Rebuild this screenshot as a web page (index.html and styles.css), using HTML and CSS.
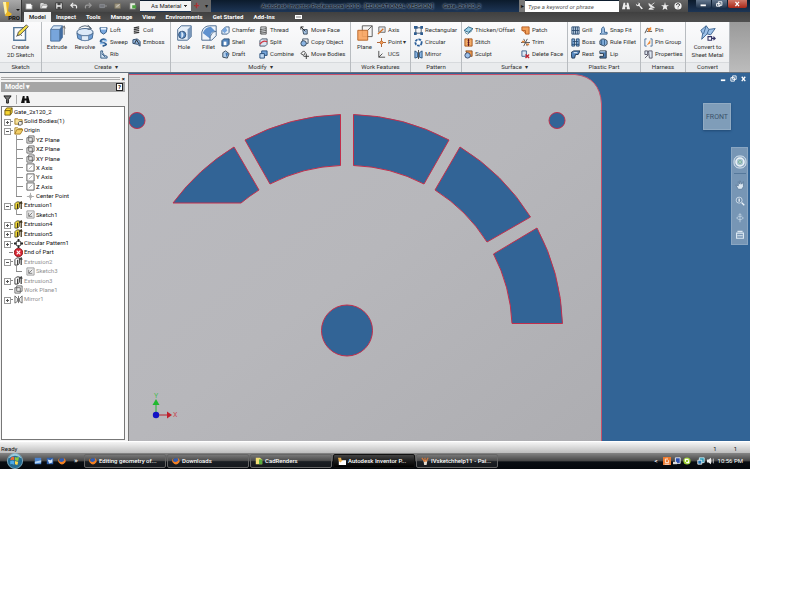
FILE: index.html
```html
<!DOCTYPE html>
<html lang="en">
<head>
  <title>Autodesk Inventor Professional 2010</title>
  <meta charset="UTF-8">
  <link rel="stylesheet" href="styles.css">
</head>
<body>
  <svg class="sprite" aria-hidden="true">
    <symbol id="i-new" viewBox="0 0 10 10"><path d="M1 2h6l2 2v5H1z" fill="#fff" stroke="#777"/></symbol>
    <symbol id="i-open" viewBox="0 0 10 10"><path d="M1 8V2h3l1 1h3v2" fill="#ccc" stroke="#eee"/><path d="M1 8l2-4h7L8 8z" fill="#eee" stroke="#666" stroke-width=".6"/></symbol>
    <symbol id="i-save" viewBox="0 0 10 10"><path d="M1 1h8v8H1z" fill="#f4f4f4" stroke="#222"/><path d="M3 1h4v3H3zM3 6h4v3H3z" fill="#444"/></symbol>
    <symbol id="i-undo" viewBox="0 0 10 10"><path d="M4 1L1 4l3 3M1 4h5q3 0 2 4" fill="none" stroke="#eee" stroke-width="1.5"/></symbol>
    <symbol id="i-redo" viewBox="0 0 10 10"><path d="M6 1l3 3-3 3M9 4H4Q1 4 2 8" fill="none" stroke="#999" stroke-width="1.5"/></symbol>
    <symbol id="i-select" viewBox="0 0 10 10"><path d="M1 3h6v4H1z" fill="#75777c" stroke="#8c8e94"/><path d="M7 5h3" stroke="#999"/></symbol>
    <symbol id="i-return" viewBox="0 0 10 10"><path d="M1 2h7v6H1z" fill="#a59c86" stroke="#77715f"/><path d="M3 6l4-3" stroke="#ddd"/></symbol>
    <symbol id="i-table" viewBox="0 0 10 10"><path d="M1 1h7v8H1z" fill="#e8f0e0" stroke="#666"/><path d="M4 4h5v4H4z" fill="#4da340"/></symbol>
    <symbol id="i-pencil" viewBox="0 0 20 20"><path d="M2 4h13v14H2z" fill="#fbfcfd" stroke="#56789a" stroke-width="1.6"/><path d="M5 14q2-5 6-1" fill="none" stroke="#555"/><path d="M6 13l1-4 9-8 2 2-9 9z" fill="#f4df46" stroke="#474747"/></symbol>
    <symbol id="i-extrude" viewBox="0 0 20 20"><path d="M3 6h10v13H3z" fill="#78a5dc"/><path d="M3 6l3-4h10l-3 4z" fill="#d7e7f8"/><path d="M13 6l3-4v13l-3 4z" fill="#416da3"/><path d="M3 6h10v13H3zM3 6l3-4h10l-3 4m3-4v13l-3 4" fill="none" stroke="#4a6f9c"/><path d="M18 12V3m-2 2l2-3 1 3" fill="none" stroke="#666"/></symbol>
    <symbol id="i-revolve" viewBox="0 0 20 20"><path d="M1 10l1 6q8 5 16 0l1-6q-9 5-18 0z" fill="#6f9fd6" stroke="#3d628c"/><ellipse cx="10" cy="9" rx="9" ry="4" fill="#dce9f8" stroke="#3b5c82"/><path d="M3 5q7-6 14 0M13 1l4 4-4 1" fill="none" stroke="#456"/><path d="M6 13h8v5q-4 1-8 0z" fill="#e0ebf7" stroke="#6685a8"/></symbol>
    <symbol id="i-hole" viewBox="0 0 20 20"><path d="M3 6l4-4h11v12l-4 4H3z" fill="#e6eff9" stroke="#3f6289"/><path d="M14 6l4-4v12l-4 4z" fill="#7896b9"/><circle cx="8" cy="12" r="4" fill="#5688bf" stroke="#2b4c74"/><path d="M7 8v8q5-4 0-8" fill="#d8e8fa"/></symbol>
    <symbol id="i-fillet" viewBox="0 0 20 20"><path d="M2 18V9q2-7 9-7h7v11l-5 5z" fill="#edf3fa" stroke="#3f6289"/><path d="M3 10q3-7 9-7l5 5q-6 0-6 8z" fill="#5e91cf"/><path d="M11 18q0-9 7-10" fill="none" stroke="#3f6289"/></symbol>
    <symbol id="i-plane" viewBox="0 0 20 20"><path d="M7 2h11v12H7z" fill="#f5f5f5" stroke="#555"/><path d="M2 7h11v11H2z" fill="#f8a35d" stroke="#b66121" fill-opacity=".9"/><path d="M13 7l5-5" stroke="#555"/></symbol>
    <symbol id="i-convert" viewBox="0 0 20 20"><path d="M2 7l6-5 3 4 7-1-5 7-4-1-6 6 1-6z" fill="#9dc1e8" stroke="#3c638f"/><path d="M8 2l-3 9M11 6l-2 5" stroke="#3c638f"/><path d="M10 14h4v4h-4zM14 16h4m-2-2l2 2-2 2" fill="#fff" stroke="#336" stroke-width="1.2"/></symbol>
    <symbol id="i-loft" viewBox="0 0 10 10"><path d="M1 2h8L8 7 5 9 2 7z" fill="#79a8df" stroke="#28527e"/><path d="M2 2h6v2H2z" fill="#eaf4ff"/></symbol>
    <symbol id="i-sweep" viewBox="0 0 10 10"><path d="M8 3Q6 0 3 2T4 5t4 2-4 2" fill="none" stroke="#2e5f94" stroke-width="2"/><path d="M5 3h4M1 6h4" stroke="#8abbed" stroke-width="2"/></symbol>
    <symbol id="i-rib" viewBox="0 0 10 10"><path d="M2 1v8h7V7L6 6 4 3V1z" fill="#d2e3f4" stroke="#28527e"/><path d="M3 4l4 4" stroke="#28527e"/></symbol>
    <symbol id="i-coil" viewBox="0 0 10 10"><path d="M2 2l6-1M2 4l6-1M2 6l6-1M2 8l6-1" stroke="#333" stroke-width="1.3"/></symbol>
    <symbol id="i-emboss" viewBox="0 0 10 10"><path d="M1 2l5-1 3 3v5L6 7 1 6z" fill="#90b5de" stroke="#284566"/><path d="M3 6l2-4 3 5" fill="none" stroke="#222"/></symbol>
    <symbol id="i-chamfer" viewBox="0 0 10 10"><path d="M1 9V5l4-4h4v6L7 9z" fill="#e7f0f9" stroke="#3b5e87"/><path d="M1 5l4-4 2 4-3 3z" fill="#78a6dd"/></symbol>
    <symbol id="i-shell" viewBox="0 0 10 10"><path d="M1 3l2-2h6v6L7 9H1z" fill="#5386bf" stroke="#27496e"/><path d="M3 4h3v4H3z" fill="#fff"/></symbol>
    <symbol id="i-draft" viewBox="0 0 10 10"><path d="M2 3l3-2 4 3-2 5-5-1z" fill="#b1cdeb" stroke="#345"/><path d="M5 3l3 1-2 4z" fill="#3b72b0"/></symbol>
    <symbol id="i-thread" viewBox="0 0 10 10"><path d="M2 1h6v8H2zM1 4l7-1M1 6l7-1M1 8l7-1" fill="#e5e8eb" stroke="#555"/></symbol>
    <symbol id="i-split" viewBox="0 0 10 10"><path d="M1 3l2-2h6v6L7 9H1z" fill="#d9e5f2" stroke="#456"/><path d="M1 7q3-5 8-3" fill="none" stroke="#cf3945" stroke-width="1.4"/></symbol>
    <symbol id="i-combine" viewBox="0 0 10 10"><path d="M3 1h6v5H3z" fill="#76a6db" stroke="#234b77"/><path d="M1 4h5v5H1z" fill="#bed7f1" stroke="#234b77"/></symbol>
    <symbol id="i-moveface" viewBox="0 0 10 10"><path d="M3 4h5v5H4z" fill="#a8c7e9" stroke="#345"/><path d="M1 4V1h3M1 1l5 5" fill="none" stroke="#222"/></symbol>
    <symbol id="i-copy" viewBox="0 0 10 10"><path d="M3 1h6v5H3z" fill="#eee" stroke="#456"/><circle cx="4" cy="6" r="3" fill="#8bb5e4" stroke="#345"/></symbol>
    <symbol id="i-movebody" viewBox="0 0 10 10"><path d="M4 1L1 4l3 2 2-3zM7 4v6M4 7h6" fill="none" stroke="#333"/></symbol>
    <symbol id="i-axis" viewBox="0 0 10 10"><path d="M2 1h7v6H2z" fill="#e4e8ed" stroke="#666"/><path d="M1 9l6-6" stroke="#d86f21" stroke-width="1.4"/></symbol>
    <symbol id="i-point" viewBox="0 0 10 10"><path d="M5 0v10M0 5h10" stroke="#a85a28"/><path d="M5 3l2 2-2 2-2-2z" fill="#f4a25f" stroke="#b45b1d"/></symbol>
    <symbol id="i-ucs" viewBox="0 0 10 10"><path d="M2 1v7h7M2 8l4-4" fill="none" stroke="#444"/></symbol>
    <symbol id="i-rect" viewBox="0 0 10 10"><path d="M2 2h6v6H2z" fill="none" stroke="#456"/><path d="M0 0h4v3H0zM7 0h3v3H7zM0 7h3v3H0zM7 7h3v3H7z" fill="#2f5d91"/></symbol>
    <symbol id="i-circ" viewBox="0 0 10 10"><circle cx="5" cy="5" r="3.5" fill="#fff" stroke="#295d98" stroke-width="2" stroke-dasharray="3 1"/></symbol>
    <symbol id="i-mirror" viewBox="0 0 10 10"><path d="M1 1l3 2v5L1 9zM9 1L6 3v5l3 1z" fill="#8ab5e5" stroke="#28527e"/><path d="M5 0v10" stroke="#444"/></symbol>
    <symbol id="i-thicken" viewBox="0 0 10 10"><path d="M0 5l5-4 5 2-5 4z" fill="#9bd0e8" stroke="#2b607e"/><path d="M1 7l3 2 5-4" fill="none" stroke="#397491"/></symbol>
    <symbol id="i-stitch" viewBox="0 0 10 10"><path d="M1 1h8v8H1z" fill="#f4ad68" stroke="#a45119"/><path d="M5 1v8M4 3h2M4 5h2M4 7h2" stroke="#512"/></symbol>
    <symbol id="i-sculpt" viewBox="0 0 10 10"><path d="M2 1h7v6H5z" fill="#f59b4c" stroke="#844c22"/><circle cx="4" cy="6" r="3" fill="#9bbfe8" stroke="#346"/></symbol>
    <symbol id="i-patch" viewBox="0 0 10 10"><path d="M1 1h8v8H5V5H1z" fill="#f3a15a" stroke="#b4591e"/><path d="M2 6h2v2" fill="none" stroke="#d97831"/></symbol>
    <symbol id="i-trim" viewBox="0 0 10 10"><path d="M0 5h10M3 1l4 8M7 1L3 9" stroke="#555"/><path d="M1 3h3v2H1zM6 6h3v2H6z" fill="#dd853d"/></symbol>
    <symbol id="i-delface" viewBox="0 0 10 10"><path d="M1 1h5v6H1z" fill="#dde8f5" stroke="#3a5f8b"/><path d="M5 5l4 4M9 5L5 9" stroke="#c12331" stroke-width="1.5"/></symbol>
    <symbol id="i-grill" viewBox="0 0 10 10"><path d="M1 1h8v8H1z" fill="#cbdced" stroke="#29496e"/><path d="M3 1v8M5 1v8M7 1v8M1 5h8" stroke="#29496e"/></symbol>
    <symbol id="i-boss" viewBox="0 0 10 10"><path d="M1 1h3v8H1zM6 1h3v8H6zM2 4h6M1 7h8" fill="#82aedd" stroke="#24486e"/></symbol>
    <symbol id="i-rest" viewBox="0 0 10 10"><path d="M0 3l3-2h7L8 5H5L4 9H1z" fill="#5587be" stroke="#1c3350"/><path d="M3 3h4" stroke="#fff"/></symbol>
    <symbol id="i-snap" viewBox="0 0 10 10"><path d="M3 7V3q2-4 3 0v4h3v2H1z" fill="#a7c8ed" stroke="#2b5887"/></symbol>
    <symbol id="i-rule" viewBox="0 0 10 10"><path d="M1 3q3-4 8 0v4L6 9 1 7z" fill="#8ab4e1" stroke="#345"/><path d="M3 2v6M6 2v6" stroke="#285681"/></symbol>
    <symbol id="i-lip" viewBox="0 0 10 10"><path d="M1 1h7v8H1V7h4V4H1z" fill="#4c7db3" stroke="#234"/><path d="M1 2h6" stroke="#cfe0f2"/></symbol>
    <symbol id="i-pin" viewBox="0 0 10 10"><path d="M1 8l3-6M3 6h6M4 3h3" stroke="#444"/><path d="M4 3l4-2v3L5 7z" fill="#ee8732"/></symbol>
    <symbol id="i-pingroup" viewBox="0 0 10 10"><path d="M3 1H1v8h2M7 1h2v8H7" fill="none" stroke="#446c98"/><path d="M3 8l4-6v4z" fill="#ed8833"/></symbol>
    <symbol id="i-props" viewBox="0 0 10 10"><path d="M1 1h3v4H1zM5 1h4v8H6zM1 9l4-4" fill="#dfe8f3" stroke="#556"/></symbol>
    <symbol id="i-binoc" viewBox="0 0 10 10"><path d="M2 1h2v3h2V1h2l2 8H6V6H4v3H0z" fill="currentColor"/></symbol>
    <symbol id="i-wrench" viewBox="0 0 10 10"><path d="M1 2l2 2 2-2-2-1q4-1 3 3l4 4-2 1-3-4Q1 6 1 2z" fill="currentColor"/></symbol>
    <symbol id="i-dish" viewBox="0 0 10 10"><path d="M1 2q1 6 7 5zM4 4l4-3M3 7L1 9h6" fill="currentColor" stroke="currentColor"/></symbol>
    <symbol id="i-star" viewBox="0 0 10 10"><path d="M5 0l1 4h4L7 6l1 4-3-2-3 2 1-4-3-2h4z" fill="currentColor"/></symbol>
    <symbol id="i-help" viewBox="0 0 10 10"><circle cx="5" cy="5" r="4.5" fill="#f4f4f4"/><path d="M3 4q0-2 2-2t2 2L5 6M5 7v1" fill="none" stroke="#333" stroke-width="1.2"/></symbol>
    <symbol id="i-funnel" viewBox="0 0 10 10"><path d="M1 1h8L6 5v4H4V5z" fill="#777" stroke="#111"/></symbol>
    <symbol id="t-part" viewBox="0 0 10 10"><path d="M1 4l2-3h6v5L7 9H1z" fill="#f7d531" stroke="#705a10"/><path d="M1 4h6v5M7 4l2-3" fill="none" stroke="#705a10"/></symbol>
    <symbol id="t-folder" viewBox="0 0 10 10"><path d="M1 9V2h3l1 1h4v2" fill="#fff3b3" stroke="#a47b21"/><path d="M1 9l2-5h7L7 9z" fill="#f3cf68" stroke="#a47b21"/></symbol>
    <symbol id="t-bodies" viewBox="0 0 10 10"><path d="M1 8V2h3l1 1h4v5z" fill="#f7e29a" stroke="#a47b21"/><path d="M5 6l1-1h3v3L8 9H5z" fill="#eee" stroke="#555"/></symbol>
    <symbol id="t-plane" viewBox="0 0 10 10"><path d="M3 1h6v6H3zM1 3h6v6H1z" fill="#eee" stroke="#666"/></symbol>
    <symbol id="t-axis" viewBox="0 0 10 10"><path d="M1 1h8v8H1z" fill="#fff" stroke="#555"/><path d="M3 7l4-4" stroke="#aaa"/></symbol>
    <symbol id="t-point" viewBox="0 0 10 10"><path d="M5 1v8M1 5h8M5 3l2 2-2 2-2-2z" fill="#fff" stroke="#aaa"/></symbol>
    <symbol id="t-extr" viewBox="0 0 10 10"><path d="M1 3l2-2h3v6L4 9H1z" fill="#f5dc35" stroke="#553"/><path d="M4 3v6M8 9V1M6 3l2-2 1 2" fill="none" stroke="#3e321a" stroke-width="1.4"/></symbol>
    <symbol id="t-extroff" viewBox="0 0 10 10"><path d="M1 3l2-2h3v6L4 9H1z" fill="#fff" stroke="#333"/><path d="M4 3v6M8 9V1M6 3l2-2 1 2" fill="none" stroke="#444" stroke-width="1.4"/></symbol>
    <symbol id="t-sketch" viewBox="0 0 10 10"><path d="M1 1h8v8H1z" fill="#eee" stroke="#999"/><path d="M3 3v4h4M3 7l4-4" fill="none" stroke="#777"/></symbol>
    <symbol id="t-circ" viewBox="0 0 10 10"><path d="M4 0h2v3H4zM4 7h2v3H4zM0 4h3v2H0zM7 4h3v2H7z" fill="#222"/><circle cx="5" cy="5" r="3" fill="none" stroke="#333"/></symbol>
    <symbol id="t-end" viewBox="0 0 10 10"><circle cx="5" cy="5" r="4.5" fill="#d92635" stroke="#811"/><path d="M3 3l4 4M7 3L3 7" stroke="#fff" stroke-width="1.3"/></symbol>
    <symbol id="t-mirror" viewBox="0 0 10 10"><path d="M1 1l3 3v3L1 9zM9 1L6 4v3l3 2zM5 1v8" fill="#eee" stroke="#666"/></symbol>
    <symbol id="k-fox" viewBox="0 0 10 10"><circle cx="5" cy="5" r="3.5" fill="#315cb2"/><path d="M2 1Q0 5 3 6t5-2l-1-3q4 3 2 6-4 5-8 0-2-3 1-6z" fill="#f28124"/></symbol>
    <symbol id="k-desk" viewBox="0 0 10 10"><path d="M1 1h8v8H1z" fill="#4b83cd"/><path d="M1 6l8-2v3L1 8z" fill="#b5d6f5"/></symbol>
    <symbol id="k-switch" viewBox="0 0 10 10"><path d="M1 1h8v8H1z" fill="#2d5eaa"/><path d="M2 3l4 1 2-2v5L4 8z" fill="#d2e4f7"/></symbol>
    <symbol id="k-folder" viewBox="0 0 10 10"><path d="M1 1h5l3 2v6H1z" fill="#f3df75"/><path d="M5 3h4v6H5z" fill="#58ad3f"/></symbol>
    <symbol id="k-inv" viewBox="0 0 10 10"><path d="M1 4h9v6H1z" fill="#fff"/><path d="M0 1h4v2l2 1-3 3-2-2z" fill="#e8ad4b"/></symbol>
    <symbol id="k-paint" viewBox="0 0 10 10"><path d="M3 4h5l-1 6H4z" fill="#e5ddd1"/><path d="M1 1l4 5M5 1v4M9 1L6 6" stroke="#dc7937" stroke-width="1.4"/></symbol>
    <symbol id="k-java" viewBox="0 0 10 10"><path d="M0 0h10v10H0z" fill="#ee792d"/><path d="M3 2v5h4V4M5 1v3M2 9h6" fill="none" stroke="#fff"/></symbol>
    <symbol id="k-net" viewBox="0 0 10 10"><path d="M3 1h6v7H3z" fill="#2b4fb0" stroke="#fff"/><path d="M0 6h5v3H0z" fill="#ddd"/></symbol>
    <symbol id="k-update" viewBox="0 0 10 10"><circle cx="5" cy="5" r="4.5" fill="#9bcf2e"/><path d="M3 6V3h4M7 4v3H4" fill="none" stroke="#fff" stroke-width="1.5"/></symbol>
    <symbol id="k-sync" viewBox="0 0 10 10"><path d="M3 1h6v6H3z" fill="#2a9bb8" stroke="#d8f6ff"/><path d="M1 4h5v5H1z" fill="#2674b1" stroke="#fff"/></symbol>
    <symbol id="k-sound" viewBox="0 0 10 10"><path d="M0 3h2l3-2v8L2 7H0z" fill="#eee"/><path d="M6 3v4M8 2v6" stroke="#ccc"/></symbol>
  </svg>

  <div class="desktop">
    <header class="top">
      <button class="app-button" aria-label="Application menu">
        <svg viewBox="0 0 21 22"><path d="M3 2h6v2L8 11l4 3-2 2H5l1-3L5 4H3z" fill="#e9b524"/><path d="M3 2h3l1 10-2 3z" fill="#fff1a2"/><path d="M16 9h4l-2 2z" fill="#111"/></svg>
        <span>PRO</span>
      </button>
      <div class="bars">
        <div class="title-bar">
          <div class="quick">
            <button aria-label="New"><svg><use href="#i-new"/></svg></button>
            <button aria-label="Open"><svg><use href="#i-open"/></svg></button>
            <button aria-label="Save"><svg><use href="#i-save"/></svg></button>
            <button aria-label="Undo"><svg><use href="#i-undo"/></svg></button>
            <button aria-label="Redo"><svg><use href="#i-redo"/></svg></button>
            <button aria-label="Select"><svg><use href="#i-select"/></svg></button>
            <button aria-label="Return"><svg><use href="#i-return"/></svg></button>
            <button aria-label="Update"><svg><use href="#i-table"/></svg></button>
          </div>
          <select class="material" aria-label="Color"><option>As Material</option></select>
          <span class="quick-end"><b>+</b>▾</span>
          <h1><span>Autodesk Inventor Professional 2010 - [EDUCATIONAL VERSION]</span><span>Gate_2x120_2</span></h1>
          <span class="search-arrow">▸</span>
          <input class="search" type="text" placeholder="Type a keyword or phrase" aria-label="Search help">
          <div class="info">
            <button aria-label="Find"><svg><use href="#i-binoc"/></svg></button>
            <button aria-label="Tools"><svg><use href="#i-wrench"/></svg></button>
            <button aria-label="News"><svg><use href="#i-dish"/></svg></button>
            <button aria-label="Favorites"><svg><use href="#i-star"/></svg></button>
            <button aria-label="Help"><svg><use href="#i-help"/></svg></button>
          </div>
          <div class="window-buttons">
            <button aria-label="Minimize"><svg viewBox="0 0 14 9"><path d="M4 5h6v2H4z" fill="#fff"/></svg></button>
            <button aria-label="Restore"><svg viewBox="0 0 14 9"><path d="M6 2h4v4H6zM4 4h4v3H4z" fill="none" stroke="#fff"/></svg></button>
            <button class="close" aria-label="Close"><svg viewBox="0 0 14 9"><path d="M5 2l4 5M9 2L5 7" stroke="#fff" stroke-width="1.4"/></svg></button>
          </div>
        </div>
        <nav class="tabs">
          <button class="active">Model</button>
          <button>Inspect</button>
          <button>Tools</button>
          <button>Manage</button>
          <button>View</button>
          <button>Environments</button>
          <button>Get Started</button>
          <button>Add-Ins</button>
          <button aria-label="Minimize ribbon"><i class="ribbon-toggle"></i></button>
        </nav>
      </div>
    </header>

    <div class="ribbon">
      <section class="panel">
        <div class="tools sketch-tools">
          <button class="big"><svg><use href="#i-pencil"/></svg>Create<br>2D Sketch</button>
        </div>
        <h2>Sketch</h2>
      </section>
      <section class="panel">
        <div class="tools create-tools">
          <button class="big"><svg><use href="#i-extrude"/></svg>Extrude</button>
          <button class="big"><svg><use href="#i-revolve"/></svg>Revolve</button>
          <button><svg><use href="#i-loft"/></svg>Loft</button>
          <button><svg><use href="#i-sweep"/></svg>Sweep</button>
          <button><svg><use href="#i-rib"/></svg>Rib</button>
          <button><svg><use href="#i-coil"/></svg>Coil</button>
          <button><svg><use href="#i-emboss"/></svg>Emboss</button>
        </div>
        <h2 class="more">Create</h2>
      </section>
      <section class="panel">
        <div class="tools modify-tools">
          <button class="big"><svg><use href="#i-hole"/></svg>Hole</button>
          <button class="big"><svg><use href="#i-fillet"/></svg>Fillet</button>
          <button><svg><use href="#i-chamfer"/></svg>Chamfer</button>
          <button><svg><use href="#i-shell"/></svg>Shell</button>
          <button><svg><use href="#i-draft"/></svg>Draft</button>
          <button><svg><use href="#i-thread"/></svg>Thread</button>
          <button><svg><use href="#i-split"/></svg>Split</button>
          <button><svg><use href="#i-combine"/></svg>Combine</button>
          <button><svg><use href="#i-moveface"/></svg>Move Face</button>
          <button><svg><use href="#i-copy"/></svg>Copy Object</button>
          <button><svg><use href="#i-movebody"/></svg>Move Bodies</button>
        </div>
        <h2 class="more">Modify</h2>
      </section>
      <section class="panel">
        <div class="tools work-tools">
          <button class="big"><svg><use href="#i-plane"/></svg>Plane</button>
          <button><svg><use href="#i-axis"/></svg>Axis</button>
          <button><svg><use href="#i-point"/></svg>Point ▾</button>
          <button><svg><use href="#i-ucs"/></svg>UCS</button>
        </div>
        <h2>Work Features</h2>
      </section>
      <section class="panel">
        <div class="tools">
          <button><svg><use href="#i-rect"/></svg>Rectangular</button>
          <button><svg><use href="#i-circ"/></svg>Circular</button>
          <button><svg><use href="#i-mirror"/></svg>Mirror</button>
        </div>
        <h2>Pattern</h2>
      </section>
      <section class="panel">
        <div class="tools surface-tools">
          <button><svg><use href="#i-thicken"/></svg>Thicken/Offset</button>
          <button><svg><use href="#i-stitch"/></svg>Stitch</button>
          <button><svg><use href="#i-sculpt"/></svg>Sculpt</button>
          <button><svg><use href="#i-patch"/></svg>Patch</button>
          <button><svg><use href="#i-trim"/></svg>Trim</button>
          <button><svg><use href="#i-delface"/></svg>Delete Face</button>
        </div>
        <h2 class="more">Surface</h2>
      </section>
      <section class="panel">
        <div class="tools plastic-tools">
          <button><svg><use href="#i-grill"/></svg>Grill</button>
          <button><svg><use href="#i-boss"/></svg>Boss</button>
          <button><svg><use href="#i-rest"/></svg>Rest</button>
          <button><svg><use href="#i-snap"/></svg>Snap Fit</button>
          <button><svg><use href="#i-rule"/></svg>Rule Fillet</button>
          <button><svg><use href="#i-lip"/></svg>Lip</button>
        </div>
        <h2>Plastic Part</h2>
      </section>
      <section class="panel">
        <div class="tools">
          <button><svg><use href="#i-pin"/></svg>Pin</button>
          <button><svg><use href="#i-pingroup"/></svg>Pin Group</button>
          <button><svg><use href="#i-props"/></svg>Properties</button>
        </div>
        <h2>Harness</h2>
      </section>
      <section class="panel">
        <div class="tools convert-tools">
          <button class="big"><svg><use href="#i-convert"/></svg>Convert to<br>Sheet Metal</button>
        </div>
        <h2>Convert</h2>
      </section>
    </div>

    <main class="workspace">
      <aside class="browser">
        <div class="grip"><i></i><button aria-label="Close browser">×</button></div>
        <div class="browser-title"><span>Model ▾</span><button aria-label="Help">?</button></div>
        <div class="browser-tools">
          <button aria-label="Filter"><svg><use href="#i-funnel"/></svg></button>
          <button aria-label="Find"><svg><use href="#i-binoc"/></svg></button>
        </div>
        <div class="tree-box">
          <ul class="tree">
            <li class="root"><svg><use href="#t-part"/></svg>Gate_2x120_2</li>
            <li><i class="plus"></i><svg><use href="#t-bodies"/></svg>Solid Bodies(1)</li>
            <li><i class="minus"></i><svg><use href="#t-folder"/></svg>Origin</li>
            <li class="child"><i></i><svg><use href="#t-plane"/></svg>YZ Plane</li>
            <li class="child"><i></i><svg><use href="#t-plane"/></svg>XZ Plane</li>
            <li class="child"><i></i><svg><use href="#t-plane"/></svg>XY Plane</li>
            <li class="child"><i></i><svg><use href="#t-axis"/></svg>X Axis</li>
            <li class="child"><i></i><svg><use href="#t-axis"/></svg>Y Axis</li>
            <li class="child"><i></i><svg><use href="#t-axis"/></svg>Z Axis</li>
            <li class="child last"><i></i><svg><use href="#t-point"/></svg>Center Point</li>
            <li><i class="minus"></i><svg><use href="#t-extr"/></svg>Extrusion1</li>
            <li class="child last"><i></i><svg><use href="#t-sketch"/></svg>Sketch1</li>
            <li><i class="plus"></i><svg><use href="#t-extr"/></svg>Extrusion4</li>
            <li><i class="plus"></i><svg><use href="#t-extr"/></svg>Extrusion5</li>
            <li><i class="plus"></i><svg><use href="#t-circ"/></svg>Circular Pattern1</li>
            <li><i class="none"></i><svg><use href="#t-end"/></svg>End of Part</li>
            <li class="off"><i class="minus"></i><svg><use href="#t-extroff"/></svg>Extrusion2</li>
            <li class="child last off"><i></i><svg><use href="#t-sketch"/></svg>Sketch3</li>
            <li class="off"><i class="plus"></i><svg><use href="#t-extroff"/></svg>Extrusion3</li>
            <li class="off"><i class="none"></i><svg><use href="#t-plane"/></svg>Work Plane1</li>
            <li class="off"><i class="plus"></i><svg><use href="#t-mirror"/></svg>Mirror1</li>
          </ul>
        </div>
      </aside>

      <div class="view">
        <svg class="model" viewBox="129 73 621 368">
          <defs>
            <linearGradient id="metal" x1="0" y1="0" x2="1" y2="1">
              <stop offset="0" stop-color="#bbbbc0"/>
              <stop offset=".5" stop-color="#b7b7bb"/>
              <stop offset="1" stop-color="#adadb1"/>
            </linearGradient>
          </defs>
          <path d="M120 74.5H575Q600 77 601.5 104V450H120z" fill="url(#metal)" stroke="#c8506a"/>
          <g fill="#326496" stroke="#c22f4c">
            <circle cx="137" cy="120.5" r="8"/>
            <circle cx="557" cy="120.5" r="8"/>
            <circle cx="347" cy="330.5" r="25.5"/>
            <path d="M173 203A216 216 0 0 1 234 147L259 190A165 165 0 0 0 241 203z"/>
            <path d="M245 140A216 216 0 0 1 340.500 114.500V165.500A165 165 0 0 0 270 184z"/>
            <path d="M353.500 114.500A216 216 0 0 1 449 140L424 184A165 165 0 0 0 353.500 165.500z"/>
            <path d="M460 147A216 216 0 0 1 530.500 217L487 242A165 165 0 0 0 435 190z"/>
            <path d="M537 228A216 216 0 0 1 562.500 323.500H512A165 165 0 0 0 493.500 254z"/>
          </g>
          <path d="M156 414V404" stroke="#25b534"/><path d="M152.500 405L156 399l3.500 6z" fill="#20b92f"/>
          <path d="M157 415h10" stroke="#b9202c"/><path d="M167 411.500l5 3.500-5 3.500z" fill="#c01f2c"/>
          <circle cx="156" cy="415" r="3.200" fill="#1212c4"/>
          <text x="154" y="398" fill="#4bbd58">Y</text>
          <text x="173" y="417" fill="#c94a54">X</text>
        </svg>
        <div class="doc-buttons">
          <button aria-label="Minimize document"><svg viewBox="0 0 8 8"><path d="M1 5h5v2H1z" fill="#fff"/></svg></button>
          <button aria-label="Restore document"><svg viewBox="0 0 8 8"><path d="M3 1h4v4H3zM1 3h4v4H1z" fill="none" stroke="#fff"/></svg></button>
          <button aria-label="Close document"><svg viewBox="0 0 8 8"><path d="M2 2l4 5M6 2L2 7" stroke="#fff" stroke-width="1.5"/></svg></button>
        </div>
        <button class="cube">FRONT</button>
        <div class="nav-bar">
          <button aria-label="Steering wheel"><svg viewBox="0 0 14 14"><rect x="1" y="1" width="12" height="12" rx="5" fill="#8aa4bf" stroke="#d5e3ee"/><circle cx="7" cy="7" r="4" fill="#a9c3d4" stroke="#eef5f8" stroke-width="1.5"/><circle cx="7" cy="7" r="1.5" fill="#bad0df" stroke="#7fb596"/></svg></button>
          <hr>
          <button aria-label="Pan"><svg viewBox="0 0 14 14"><path d="M5 12L2 7l3 1V3l2 3V2l2 4 2-3v6l-2 3z" fill="#dce8f2" stroke="#607d9c"/></svg></button>
          <button aria-label="Zoom"><svg viewBox="0 0 14 14"><circle cx="6" cy="6" r="3.5" fill="#6c8baa" stroke="#d5e2ee"/><path d="M6 4v4M9 9l3 3" stroke="#eef4fa" stroke-width="1.5"/></svg></button>
          <button aria-label="Orbit"><svg viewBox="0 0 14 14"><path d="M7 2v10M3 7q4-4 8 0M3 7q4 4 8 0M5 4l2-2 2 2" fill="none" stroke="#bdd0e2"/></svg></button>
          <button aria-label="Look at"><svg viewBox="0 0 14 14"><path d="M3 6h8v6H3zM4 4h6M4 9h6" fill="none" stroke="#dce8f2" stroke-width="1.3"/></svg></button>
        </div>
      </div>
    </main>

    <footer class="status"><span>Ready</span><span>1</span><span>1</span></footer>

    <div class="taskbar">
      <button class="start" aria-label="Start">
        <svg viewBox="0 0 20 20"><circle cx="10" cy="10" r="9.5" fill="#256b91" stroke="#8fb9cb"/><path d="M2 7q8-7 16 0-2-6-8-6T2 7z" fill="#9bcbdc"/><path d="M5 6q2-2 4-1v4q-2-1-5 0z" fill="#ec6932"/><path d="M10 5q2 1 5 0l-1 5q-2 0-4-1z" fill="#8ac83e"/><path d="M4 10q3-1 5 0v5q-2-2-5-1z" fill="#4caae8"/><path d="M10 10q2 1 4 1l-1 4-3-1z" fill="#fbd84a"/></svg>
      </button>
      <div class="quick-launch">
        <button aria-label="Show desktop"><svg><use href="#k-desk"/></svg></button>
        <button aria-label="Switch windows"><svg><use href="#k-switch"/></svg></button>
        <button aria-label="Firefox"><svg><use href="#k-fox"/></svg></button>
        <span>»</span>
      </div>
      <div class="tasks">
        <button><svg><use href="#k-fox"/></svg>Editing geometry of...</button>
        <button><svg><use href="#k-fox"/></svg>Downloads</button>
        <button><svg><use href="#k-folder"/></svg>CadRenders</button>
        <button class="active"><svg><use href="#k-inv"/></svg>Autodesk Inventor P...</button>
        <button><svg><use href="#k-paint"/></svg>IVsketchhelp11 - Pai...</button>
      </div>
      <div class="tray">
        <b>&lt;</b>
        <svg><use href="#k-java"/></svg>
        <svg><use href="#k-net"/></svg>
        <svg><use href="#k-update"/></svg>
        <svg class="apart"><use href="#k-sync"/></svg>
        <svg><use href="#k-sound"/></svg>
        <time>10:56 PM</time>
      </div>
    </div>
  </div>
</body>
</html>
```

FILE: styles.css
```css
:root {
  --blue: #326496;
  --dark: #3b3b3b;
  --line: #b8bcc0;
  --text: #303030;
}

* {
  box-sizing: border-box;
}

body {
  margin: 0;
  padding-right: 50px;
  background: #fff;
  color: var(--text);
  font-family: Roboto, "Open Sans", sans-serif;
  font-size: 6px;
  line-height: 8px;
}

button, input, select {
  margin: 0;
  padding: 0;
  border: 0;
  background: none;
  color: inherit;
  font: inherit;
}

h1, h2, ul {
  margin: 0;
  padding: 0;
  font: inherit;
}

svg {
  display: block;
  flex: none;
}

.sprite {
  position: absolute;
  width: 0;
  height: 0;
}

/* Title bar and tabs */
.top {
  display: flex;
  height: 22px;
  background: var(--dark);
}

.app-button {
  position: relative;
  width: 22px;
  background: linear-gradient(#aaa, #686868);
  border-right: 1px solid #333;
}

.app-button svg {
  width: 21px;
  height: 22px;
}

.app-button span {
  position: absolute;
  right: 1px;
  bottom: 0;
  font-weight: 700;
  color: #111;
}

.bars {
  flex: 1;
  min-width: 0;
}

.title-bar {
  display: flex;
  align-items: center;
  height: 12px;
  background: linear-gradient(#0c1b2c, #1d3555);
}

.quick {
  display: flex;
  align-items: center;
  justify-content: space-around;
  width: 118px;
  height: 12px;
  background: linear-gradient(#747474, #484848);
}

.quick svg, .info svg {
  width: 8px;
  height: 8px;
}

.material {
  width: 51px;
  height: 10px;
  padding-left: 11px;
  appearance: none;
  background:
    linear-gradient(to bottom right, #333 50%, transparent 50%) 46px 4px / 2px 2px no-repeat,
    linear-gradient(to bottom left, #333 50%, transparent 50%) 44px 4px / 2px 2px no-repeat,
    #f2f2f2;
  color: #222;
}

.quick-end {
  display: flex;
  align-items: center;
  justify-content: space-around;
  width: 20px;
  height: 12px;
  background: #696969;
  color: #111;
}

.quick-end b {
  color: #a33;
  font-size: 10px;
}

.title-bar h1 {
  display: flex;
  flex: 1;
  justify-content: flex-end;
  gap: 10px;
  padding-right: 38px;
  color: #05090e;
  white-space: pre;
  text-shadow: 0 0 2px #8fa3ba, 0 0 2px #8fa3ba, 0 0 3px #8fa3ba;
}

.search-arrow {
  width: 6px;
  height: 12px;
  padding-top: 2px;
  background: #777;
  color: #111;
  text-align: center;
}

.search {
  width: 94px;
  height: 11px;
  padding-left: 3px;
  background: #fff;
  font-style: italic;
}

.search::placeholder {
  color: #555;
}

.info {
  display: flex;
  align-items: center;
  justify-content: space-around;
  width: 69px;
  height: 12px;
  padding-right: 3px;
  background: linear-gradient(#666, #484848);
  color: #eee;
}

.window-buttons {
  display: flex;
  align-self: flex-start;
  gap: 1px;
  padding: 0 3px 0 8px;
}

.window-buttons button {
  width: 15px;
  height: 8px;
  border-radius: 0 0 2px 2px;
  background: linear-gradient(#65788e, #20344c);
}

.window-buttons .close {
  width: 19px;
  background: linear-gradient(#cf7868, #a92718);
}

.window-buttons svg {
  height: 8px;
  margin: auto;
}

.tabs {
  display: flex;
  height: 10px;
  padding-left: 2px;
  background: linear-gradient(#404040, #505050);
  color: #fff;
  font-weight: 700;
}

.tabs button {
  padding: 0 5px;
}

.tabs .active {
  width: 27px;
  background: #f0f1f2;
  color: #333;
}

.ribbon-toggle {
  display: block;
  width: 7px;
  height: 4px;
  margin-left: 10px;
  border: 1px solid #fff;
  background: #bbb;
}

/* Ribbon */
.ribbon {
  display: grid;
  grid-template-columns: 42px 129px 180px 60px 51px 106px 73px 45px 44px;
  height: 51px;
  border-bottom: 1px solid #66727e;
  background: linear-gradient(#9a9a9a, #bcbcbc);
}

.panel {
  display: flex;
  flex-direction: column;
  background: linear-gradient(#fbfbfc, #eceef0);
  border-right: 1px solid var(--line);
  overflow: hidden;
}

.panel h2 {
  height: 10px;
  border-top: 1px solid #d7dadd;
  background: #e9ebed;
  text-align: center;
}

.more::after {
  content: "▾";
  margin-left: 3px;
}

.tools {
  display: grid;
  flex: 1;
  grid-template-rows: repeat(3, 12px);
  grid-auto-flow: column;
  align-content: center;
  padding-left: 3px;
}

.tools button {
  display: flex;
  align-items: center;
  gap: 2px;
  white-space: nowrap;
}

.tools svg {
  width: 9px;
  height: 9px;
}

.tools .big {
  display: block;
  grid-row: 1 / 4;
  align-self: start;
  text-align: center;
}

.big svg {
  width: 18px;
  height: 18px;
  margin: 0 auto 1px;
}

.sketch-tools, .convert-tools {
  grid-template-columns: 1fr;
  padding: 0;
}

.create-tools {
  grid-template-columns: 28px 28px 33px 1fr;
  padding-left: 1px;
}

.modify-tools {
  grid-template-columns: 24px 25px 38px 41px 1fr;
  padding-left: 1px;
}

.work-tools {
  grid-template-columns: 25px 1fr;
  padding-left: 1px;
}

.surface-tools {
  grid-template-columns: 57px 1fr;
  padding-left: 2px;
}

.plastic-tools {
  grid-template-columns: 28px 1fr;
}

/* Model browser */
.workspace {
  display: flex;
}

.browser {
  display: flex;
  flex-direction: column;
  flex: none;
  width: 129px;
  padding: 2px 3px 1px 1px;
  border-right: 1px solid #777;
  background: #f3f3f3;
  color: #111;
}

.grip {
  display: flex;
  align-items: center;
  gap: 2px;
  height: 7px;
}

.grip i {
  flex: 1;
  height: 3px;
  border: 1px solid #aaa;
  border-width: 1px 0;
}

.grip button {
  font-weight: 700;
}

.browser-title {
  display: flex;
  align-items: center;
  justify-content: space-between;
  height: 10px;
  padding: 0 2px 0 4px;
  background: #a6a6a6;
  color: #fff;
  font-size: 7px;
  font-weight: 700;
}

.browser-title button {
  width: 7px;
  height: 8px;
  border: 1px solid #222;
  background: #fff;
  color: #111;
  font-size: 6px;
  line-height: 6px;
}

.browser-tools {
  display: flex;
  align-items: center;
  gap: 4px;
  height: 14px;
  padding-left: 2px;
}

.browser-tools svg {
  width: 9px;
  height: 9px;
}

.browser-tools button + button {
  padding-left: 4px;
  border-left: 1px solid #aaa;
}

.tree-box {
  flex: 1;
  border: 1px solid #777;
  background: #fff;
}

.tree {
  display: grid;
  grid-auto-rows: 1fr;
  height: 197px;
  list-style: none;
}

.tree li {
  display: flex;
  align-items: center;
  gap: 1px;
  padding-left: 2px;
  white-space: nowrap;
}

.tree svg {
  width: 9px;
  height: 9px;
}

.tree i {
  position: relative;
  width: 9px;
  height: 5px;
  background: linear-gradient(#888, #888) right center / 4px 1px no-repeat;
}

.tree .plus::before, .tree .minus::before {
  content: "";
  position: absolute;
  left: 0;
  width: 5px;
  height: 5px;
  border: 1px solid #999;
  background: linear-gradient(#555, #555) center / 3px 1px no-repeat #fff;
}

.tree .plus::before {
  background: linear-gradient(#555, #555) center / 3px 1px no-repeat, linear-gradient(#555, #555) center / 1px 3px no-repeat #fff;
}

.tree .child {
  padding-left: 14px;
}

.tree .child i {
  align-self: stretch;
  height: auto;
  border-left: 1px solid #999;
  background-size: 6px 1px;
  background-position: left center;
}

.tree .last i {
  border: 0;
  background: linear-gradient(#999, #999) left top / 1px 50% no-repeat, linear-gradient(#888, #888) left center / 6px 1px no-repeat;
}

.tree .off {
  color: #929292;
}

/* Model view */
.view {
  position: relative;
  flex: 1;
  min-width: 0;
  background: var(--blue);
}

.model {
  width: 100%;
  height: auto;
}

.model text {
  font-size: 7px;
}

.doc-buttons {
  position: absolute;
  top: 2px;
  right: 3px;
  display: flex;
  gap: 3px;
}

.doc-buttons svg {
  width: 7px;
  height: 7px;
}

.cube {
  position: absolute;
  top: 30px;
  right: 19px;
  width: 28px;
  height: 27px;
  border: 1px solid #91abc3;
  background: #7f9db9;
  color: #3a526b;
  font-size: 7px;
  box-shadow: 0 1px 2px #214a75;
}

.nav-bar {
  position: absolute;
  top: 74px;
  right: 2px;
  display: flex;
  flex-direction: column;
  align-items: center;
  justify-content: space-between;
  width: 17px;
  height: 98px;
  padding: 7px 0 4px;
  border: 1px solid #8aa6c2;
  background: #7796b5;
}

.nav-bar svg {
  width: 12px;
  height: 12px;
}

.nav-bar button:first-child svg {
  width: 14px;
  height: 14px;
}

.nav-bar hr {
  width: 12px;
  margin: 0;
  border: 0;
  border-top: 1px solid #55789b;
}

/* Status bar and taskbar */
.status {
  display: flex;
  gap: 17px;
  height: 12px;
  padding: 3px 13px 0 1px;
  border-top: 1px solid #fff;
  background: linear-gradient(#f5f5f5, #bdbdbd);
  color: #111;
}

.status span:first-child {
  flex: 1;
}

.taskbar {
  display: flex;
  align-items: center;
  height: 16px;
  background: linear-gradient(#858585, #454545 50%, #090d12 55%, #05080c);
  color: #fff;
}

.start {
  width: 34px;
  height: 16px;
  padding-left: 5px;
}

.start svg {
  position: relative;
  width: 20px;
  height: 16px;
  overflow: visible;
}

.quick-launch {
  display: flex;
  align-items: center;
  gap: 4px;
  width: 50px;
}

.quick-launch svg, .tasks svg, .tray svg {
  width: 8px;
  height: 8px;
}

.quick-launch span {
  margin-left: 4px;
  font-size: 8px;
}

.tasks {
  display: grid;
  grid-template-columns: repeat(5, 82px);
  gap: 1px;
  flex: 1;
}

.tasks button {
  display: flex;
  align-items: center;
  gap: 2px;
  height: 14px;
  padding-left: 4px;
  border: 1px solid #666;
  border-radius: 2px;
  background: linear-gradient(#777, #484848 50%, #1b1f24 55%, #16191d);
  font-weight: 500;
  white-space: nowrap;
}

.tasks .active {
  border-color: #111;
  background: linear-gradient(#444, #1b1b1b 50%, #000);
}

.tray {
  display: flex;
  align-items: center;
  gap: 2px;
  padding-right: 7px;
  white-space: nowrap;
}

.tray b {
  margin-right: 3px;
}

.tray .apart {
  margin-left: 4px;
}

.tray time {
  margin-left: 1px;
}
```
